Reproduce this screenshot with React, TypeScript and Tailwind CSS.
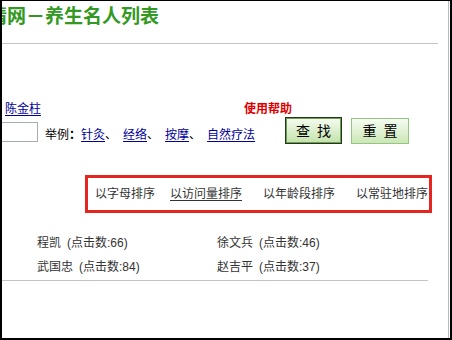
const font = '[font-family:"Liberation_Sans","Noto_Sans_CJK_SC",sans-serif]';

function Btn({ a, b, dark }: { a: string; b: string; dark?: boolean }) {
  return (
    <button
      type="button"
      className={
        dark
          ? 'flex h-[27px] w-[57px] items-center justify-center gap-[7px] border border-[#1e3a18] bg-gradient-to-b from-[#f6fcf1] to-[#c3e2aa] text-[14px] text-black shadow-[inset_0_0_0_1px_#6f9a58]'
          : 'ml-[9px] flex h-[26px] w-[58px] items-center justify-center gap-[7px] border border-[#94c486] bg-gradient-to-b from-[#f6fcf1] to-[#cbe7b5] text-[14px] text-black'
      }
    >
      <span>{a}</span>
      <span>{b}</span>
    </button>
  );
}

function Example({ text, last }: { text: string; last?: boolean }) {
  return (
    <>
      <a href="#" className="text-[#000099] underline underline-offset-2">
        {text}
      </a>
      {!last && <span className="mr-[6px] w-[12px]">、</span>}
    </>
  );
}

const people = [
  ['程凯', '66', '徐文兵', '46'],
  ['武国忠', '84', '赵吉平', '37'],
];

export default function App() {
  return (
    <div className={`flex h-[340px] w-[452px] overflow-hidden border-b-2 border-l-2 border-r-2 border-t border-black bg-white ${font}`}>
      <div className="mr-[1px] flex-1 overflow-hidden border-r border-[#b8bcbf]">
        {/* title, its first character runs off the left edge */}
        <div className="h-[43px] w-[436px] overflow-hidden border-b border-[#c4c4c4] pt-[2px]">
          <h1 className="-ml-[14px] whitespace-nowrap text-[19px] font-bold leading-[28px] text-[#339922]">
            精网－养生名人列表
          </h1>
        </div>

        {/* search */}
        <div className="mt-[57px] flex text-[12px] leading-[16px]">
          <div className="w-[242px] pl-[3px]">
            <a href="#" className="text-[#000099] underline underline-offset-2">
              陈金柱
            </a>
          </div>
          <span className="font-bold text-[#dd0000]">使用帮助</span>
        </div>

        <div className="flex h-[28px] items-end text-[12px] leading-[16px]">
          <div className="flex w-[283px] items-end">
            <input className="-ml-[24px] mb-[3px] h-[20px] w-[60px] border border-[#a5acb2] outline-none" />
            <span className="mb-[2px] ml-[7px] flex whitespace-nowrap text-black">
              举例<span className="font-bold">：</span>
              <Example text="针灸" />
              <Example text="经络" />
              <Example text="按摩" />
              <Example text="自然疗法" last />
            </span>
          </div>
          <div className="mb-[1px] flex items-end">
            <Btn a="查" b="找" dark />
            <Btn a="重" b="置" />
          </div>
        </div>

        {/* sort */}
        <div className="ml-[83px] mt-[30px] flex h-[38px] w-[347px] items-center border-[3px] border-[#e42520] text-[12px] text-[#333]">
          <span className="ml-[7px]">以字母排序</span>
          <a href="#" className="ml-[15px] underline underline-offset-2">以访问量排序</a>
          <span className="ml-[21px]">以年龄段排序</span>
          <span className="ml-[21px]">以常驻地排序</span>
        </div>

        {/* list */}
        <div className="mt-[18px] text-[12px] leading-[24px] text-[#333]">
          {people.map((r) => (
            <div key={r[0]} className="flex h-[24px] pl-[35px]">
              <span className="w-[180px]">
                {r[0]}
                <span className="ml-[6px]">(点击数:{r[1]})</span>
              </span>
              <span>
                {r[2]}
                <span className="ml-[6px]">(点击数:{r[3]})</span>
              </span>
            </div>
          ))}
        </div>
        <div className="mt-[1px] w-[426px] border-t border-[#c4c4c4]" />
      </div>
    </div>
  );
}
